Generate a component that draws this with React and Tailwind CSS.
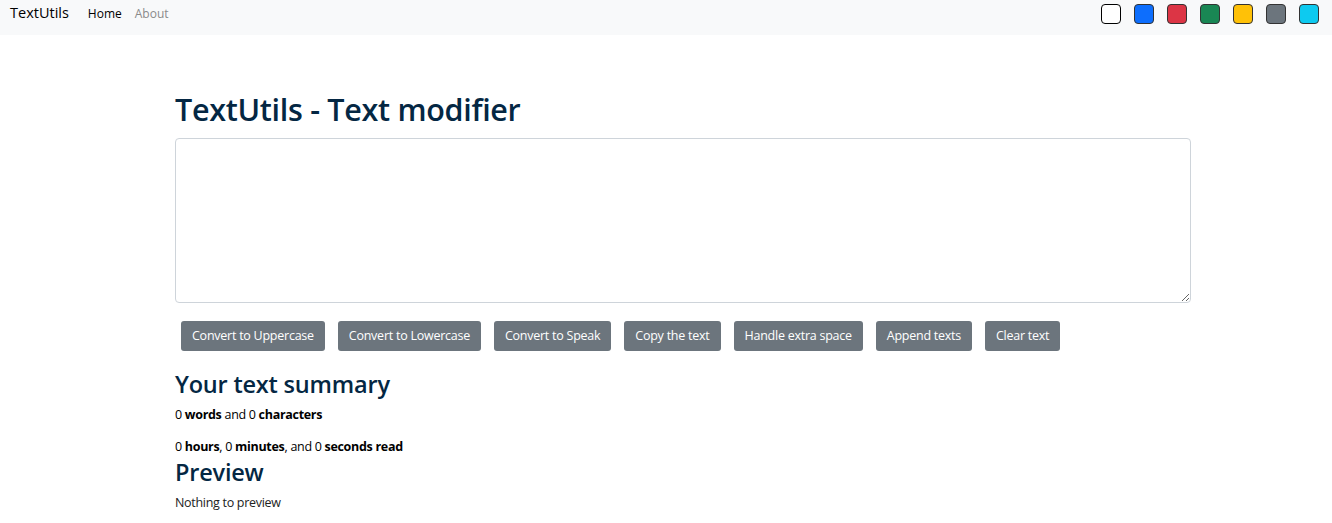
import React from "react";

const F = { fontFamily: '"Open Sans", "Noto Sans", sans-serif' };

export default function App() {
  const colors = [
    "bg-white border-black",
    "bg-[#0d6efd] border-[#333]",
    "bg-[#dc3545] border-[#333]",
    "bg-[#198754] border-[#333]",
    "bg-[#ffc107] border-[#333]",
    "bg-[#6c757d] border-[#333]",
    "bg-[#0dcaf0] border-[#333]",
  ];
  const buttons = [
    "Convert to Uppercase",
    "Convert to Lowercase",
    "Convert to Speak",
    "Copy the text",
    "Handle extra space",
    "Append texts",
    "Clear text",
  ];
  return (
    <div className="min-h-[523px] bg-white text-[#042743]" style={F}>
      <nav className="h-[35px] bg-[#f8f9fa] flex items-center pl-[10px] pr-[13px]">
        <span className="text-[14.5px] text-black leading-none -mt-[9px] mr-[19px]">TextUtils</span>
        <span className="text-[12px] text-black leading-none -mt-[7px] mr-[13px]">Home</span>
        <span className="text-[12px] text-[#8a8a8a] leading-none -mt-[7px]">About</span>
        <div className="ml-auto flex gap-[13px] -mt-[8px]">
          {colors.map((c, i) => (
            <div key={i} className={`w-[20px] h-[20px] rounded-[4px] border-[1.5px] ${c}`} />
          ))}
        </div>
      </nav>
      <main className="ml-[175px] mr-[141px]">
        <h1 className="text-[30.5px] font-semibold mt-[54px] leading-[40px] mb-[9px] tracking-[-0.3px]">TextUtils - Text modifier</h1>
        <textarea className="block w-full h-[165px] border border-[#ced4da] rounded-[4px] bg-white outline-none" />
        <div className="flex gap-[13px] ml-[6px] mt-[18px]">
          {buttons.map((b) => (
            <button key={b} className="h-[30px] px-[11px] rounded-[3px] bg-[#6c757d] text-white text-[12.5px] tracking-[-0.25px] whitespace-nowrap">
              {b}
            </button>
          ))}
        </div>
        <h2 className="text-[23.5px] font-semibold leading-[30px] mt-[18px] tracking-[-0.2px]">Your text summary</h2>
        <p className="text-[12.5px] text-black mt-[6px] leading-[20px] tracking-[-0.3px]">0 <b>words</b> and 0 <b>characters</b></p>
        <p className="text-[12.5px] text-black mt-[12px] leading-[20px] tracking-[-0.3px]">0 <b>hours</b>, 0 <b>minutes</b>, and 0 <b>seconds read</b></p>
        <h2 className="text-[23.5px] font-semibold leading-[30px] mt-[0px] tracking-[-0.2px]">Preview</h2>
        <p className="text-[12.5px] text-[#222] mt-[6px] leading-[20px] tracking-[-0.3px]">Nothing to preview</p>
      </main>
    </div>
  );
}
